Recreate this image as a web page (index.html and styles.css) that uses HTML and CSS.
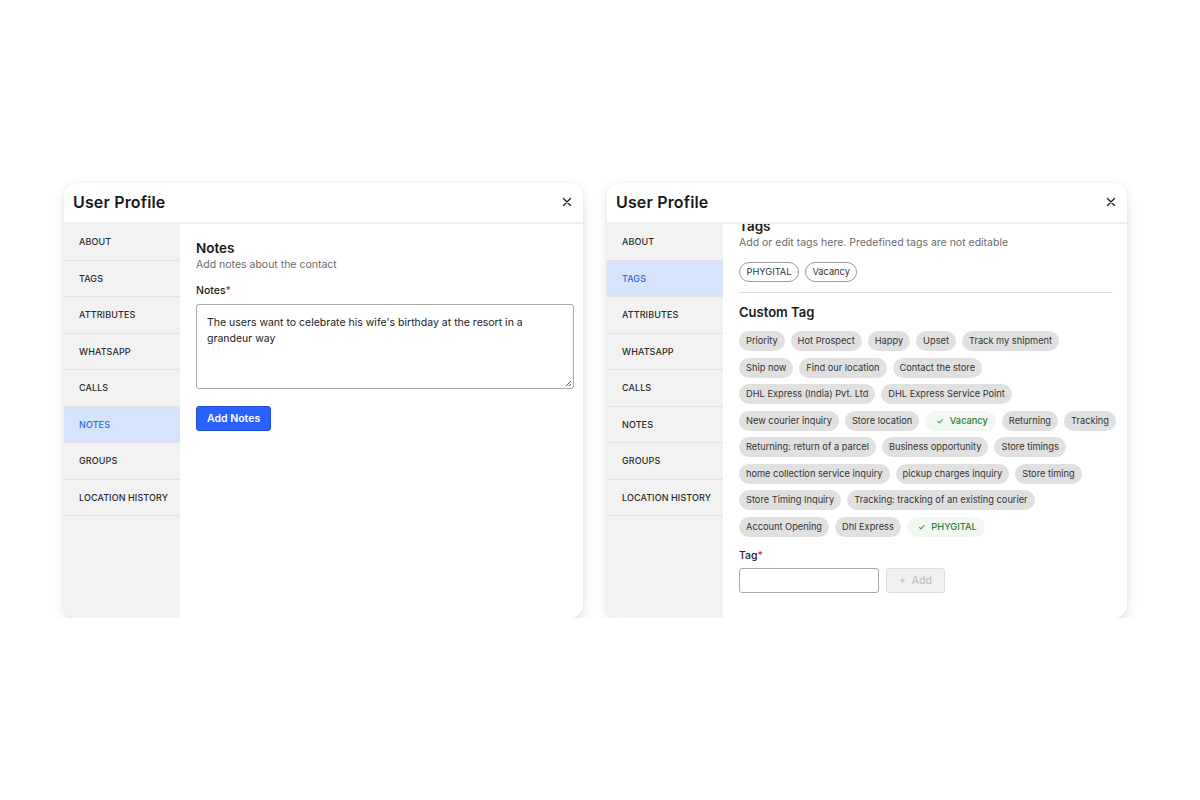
FILE: index.html
```html
<!DOCTYPE html>
<html>
<head>
<meta charset="utf-8">
<link rel="stylesheet" href="styles.css">
</head>
<body>
<div class="stage">
  <div class="card">
    <div class="card-head">
      <div class="title">User Profile</div>
      <svg class="close" width="10" height="10" viewBox="0 0 10 10"><path d="M1.5 1.5 L8.5 8.5 M8.5 1.5 L1.5 8.5" stroke="#222" stroke-width="1.4" stroke-linecap="round"/></svg>
    </div>
    <div class="card-body">
      <ul class="side">
        <li>ABOUT</li>
        <li>TAGS</li>
        <li>ATTRIBUTES</li>
        <li>WHATSAPP</li>
        <li>CALLS</li>
        <li class="active">NOTES</li>
        <li>GROUPS</li>
        <li>LOCATION HISTORY</li>
      </ul>
      <div class="pane">
        <div class="h">Notes</div>
        <div class="sub">Add notes about the contact</div>
        <div class="label">Notes<span class="req">*</span></div>
        <div class="textarea">The users want to celebrate his wife's birthday at the resort in a grandeur way
          <svg class="grip" width="8" height="8" viewBox="0 0 8 8"><path d="M7 2 L2 7 M7 5 L5 7" stroke="#555" stroke-width="1"/></svg>
        </div>
        <div class="btn-primary">Add Notes</div>
      </div>
    </div>
  </div>

  <div class="card">
    <div class="card-head">
      <div class="title">User Profile</div>
      <svg class="close" width="10" height="10" viewBox="0 0 10 10"><path d="M1.5 1.5 L8.5 8.5 M8.5 1.5 L1.5 8.5" stroke="#222" stroke-width="1.4" stroke-linecap="round"/></svg>
    </div>
    <div class="card-body">
      <ul class="side">
        <li>ABOUT</li>
        <li class="active">TAGS</li>
        <li>ATTRIBUTES</li>
        <li>WHATSAPP</li>
        <li>CALLS</li>
        <li>NOTES</li>
        <li>GROUPS</li>
        <li>LOCATION HISTORY</li>
      </ul>
      <div class="pane scrolled">
        <div class="scroll-inner">
          <div class="h">Tags</div>
          <div class="sub">Add or edit tags here. Predefined tags are not editable</div>
          <div class="chip-row top">
            <span class="chip outline">PHYGITAL</span>
            <span class="chip outline">Vacancy</span>
          </div>
          <div class="divider"></div>
          <div class="h2">Custom Tag</div>
          <div class="chip-list">
            <div class="chip-row">
              <span class="chip">Priority</span>
              <span class="chip">Hot Prospect</span>
              <span class="chip">Happy</span>
              <span class="chip">Upset</span>
              <span class="chip">Track my shipment</span>
            </div>
            <div class="chip-row">
              <span class="chip">Ship now</span>
              <span class="chip">Find our location</span>
              <span class="chip">Contact the store</span>
            </div>
            <div class="chip-row">
              <span class="chip">DHL Express (India) Pvt. Ltd</span>
              <span class="chip">DHL Express Service Point</span>
            </div>
            <div class="chip-row">
              <span class="chip">New courier inquiry</span>
              <span class="chip">Store location</span>
              <span class="chip sel"><span class="ck">&#x2713;</span>Vacancy</span>
              <span class="chip">Returning</span>
              <span class="chip">Tracking</span>
            </div>
            <div class="chip-row">
              <span class="chip">Returning: return of a parcel</span>
              <span class="chip">Business opportunity</span>
              <span class="chip">Store timings</span>
            </div>
            <div class="chip-row">
              <span class="chip">home collection service inquiry</span>
              <span class="chip">pickup charges inquiry</span>
              <span class="chip">Store timing</span>
            </div>
            <div class="chip-row">
              <span class="chip">Store Timing Inquiry</span>
              <span class="chip">Tracking: tracking of an existing courier</span>
            </div>
            <div class="chip-row">
              <span class="chip">Account Opening</span>
              <span class="chip">Dhl Express</span>
              <span class="chip sel"><span class="ck">&#x2713;</span>PHYGITAL</span>
            </div>
          </div>
          <div class="label tag-label">Tag<span class="req">*</span></div>
          <div class="add-row">
            <div class="input"></div>
            <div class="btn-disabled">+&nbsp; Add</div>
          </div>
        </div>
      </div>
    </div>
  </div>
</div>
</body>
</html>
```

FILE: styles.css
```css
* { box-sizing: border-box; }
html, body { margin: 0; padding: 0; background: #fff; }
body { font-family: Inter, "Noto Sans", sans-serif; color: #222; }

.stage {
  display: flex;
  gap: 24px;
  padding: 183px 0 0 64px;
}

.card {
  width: 519px;
  height: 435px;
  border-radius: 13px;
  background: #fff;
  box-shadow: 0 4px 12px rgba(0,0,0,0.13), 0 0 3px rgba(0,0,0,0.04);
  display: flex;
  flex-direction: column;
  overflow: hidden;
}
.card + .card { width: 520px; }

.card-head {
  height: 41px;
  flex: none;
  display: flex;
  align-items: center;
  justify-content: space-between;
  padding: 0 11px 0 9px;
  border-bottom: 2px solid #eeeeee;
}
.title { font-size: 16px; font-weight: 600; color: #1a1a1a; letter-spacing: 0.15px; margin-top: -2px; }
.close { display: block; margin-top: -1px; }

.card-body { flex: 1; display: flex; min-height: 0; }

.side {
  list-style: none;
  margin: 0;
  padding: 0;
  width: 116px;
  flex: none;
  background: #f2f2f2;
}
.side li {
  height: 36.5px;
  display: flex;
  align-items: center;
  padding-left: 15px;
  font-size: 9px;
  font-weight: 500;
  color: #2a2a2a;
  letter-spacing: 0.1px;
  border-bottom: 1px solid #e2e2e2;
}
.side li.active { background: #d6e4fb; color: #2a6ae8; }

.pane { flex: 1; padding: 15px 9px 0 16px; overflow: hidden; }
.h { font-size: 13.5px; font-weight: 600; color: #1a1a1a; line-height: 18px; }
.sub { font-size: 10.5px; color: #6b6b6b; line-height: 14px; margin-top: 1px; }
.label { font-size: 10.5px; color: #222; margin-top: 12px; line-height: 14px; font-weight: 500; }
.req { color: #d32f2f; }

.textarea {
  position: relative;
  margin-top: 6px;
  height: 85px;
  border: 1px solid #a8a8a8;
  border-radius: 3px;
  padding: 10px 10px;
  font-size: 10.5px;
  line-height: 16px;
  color: #222;
}
.grip { position: absolute; right: 1px; bottom: 1px; }

.btn-primary {
  display: inline-block;
  margin-top: 17px;
  height: 25px;
  line-height: 23px;
  padding: 0 10px;
  background: #2962ff;
  border: 1px solid #1e4fd8;
  border-radius: 3px;
  color: #fff;
  font-size: 10.5px;
  font-weight: 600;
}

.pane.scrolled { padding: 0 14px 0 16px; }
.scroll-inner { margin-top: -7px; }

.chip-list { display: flex; flex-direction: column; gap: 6.5px; }
.chip-row { display: flex; gap: 6px; }
.chip-row.top { margin-top: 12px; }
.chip {
  height: 20px;
  line-height: 20px;
  padding: 0 7px;
  border-radius: 10px;
  background: #e0e0e0;
  font-size: 9.25px;
  color: #333;
  white-space: nowrap;
}
.chip.outline {
  background: #fff;
  border: 1px solid #9a9a9a;
  line-height: 18px;
  color: #333;
  padding: 0 6.5px;
}
.chip.sel {
  background: #f1f8f1;
  color: #2e7d32;
  font-weight: 500;
  padding: 0 8px 0 11px;
}
.ck { margin-right: 6px; font-size: 8.5px; }

.divider { height: 1px; background: #e0e0e0; margin: 10px 0 10px; }
.h2 { font-size: 13px; font-weight: 600; color: #1a1a1a; line-height: 18px; margin-bottom: 10px; }

.tag-label { margin-top: 12px; }
.add-row { display: flex; gap: 7px; margin-top: 5px; }
.input {
  width: 140px;
  height: 25px;
  border: 1px solid #a8a8a8;
  border-radius: 3px;
}
.btn-disabled {
  width: 59px;
  height: 25px;
  line-height: 23px;
  text-align: center;
  background: #f0f0f0;
  border: 1px solid #dddddd;
  border-radius: 3px;
  color: #b8b8b8;
  font-size: 10.5px;
}
```
